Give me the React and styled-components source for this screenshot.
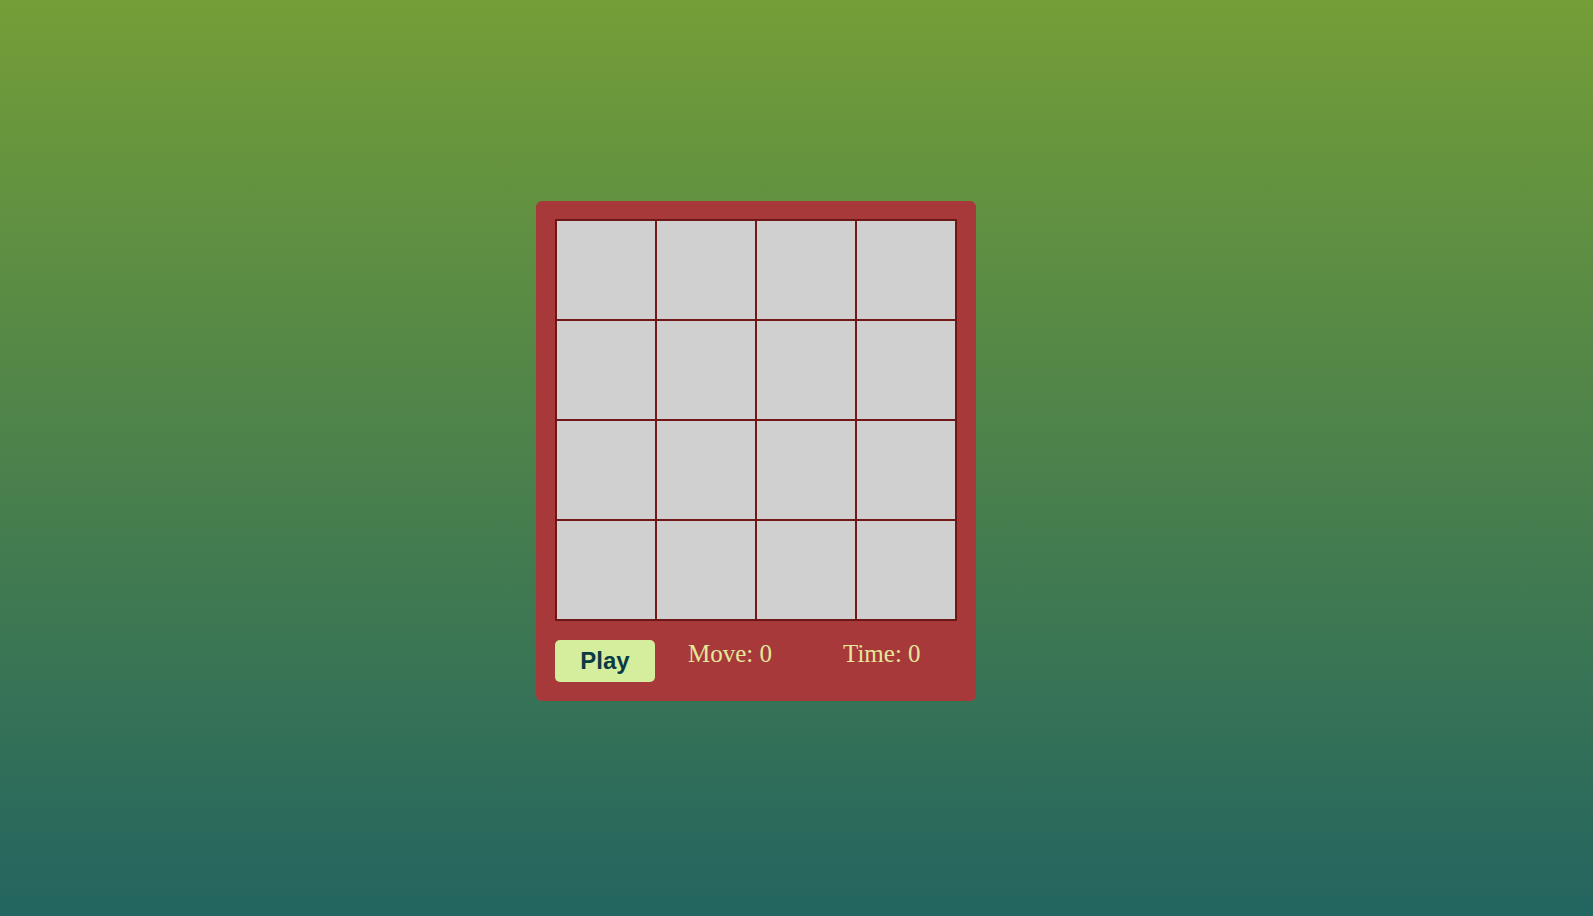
import React from "react";
import styled, { createGlobalStyle } from "styled-components";

const GlobalStyle = createGlobalStyle`
  html, body {
    margin: 0;
    padding: 0;
  }
  body {
    min-height: 100vh;
    background: linear-gradient(180deg, #749e37 0%, #236560 100%);
    font-family: "Liberation Serif", "Times New Roman", serif;
  }
`;

const Page = styled.div`
  min-height: 100vh;
  box-sizing: border-box;
  padding: 201px 0 0 536px;
`;

const Panel = styled.div`
  width: 440px;
  box-sizing: border-box;
  padding: 18px 19px 19px;
  background: #a8393a;
  border-radius: 6px;
`;

const Board = styled.div`
  display: grid;
  grid-template-columns: repeat(4, 100px);
  grid-template-rows: repeat(4, 100px);
  width: 400px;
  border: 1px solid #6a1616;
`;

const Cell = styled.div`
  box-sizing: border-box;
  background: #d0d0d0;
  border: 1px solid #721818;
`;

const Controls = styled.div`
  display: flex;
  align-items: flex-start;
  margin-top: 19px;
`;

const PlayButton = styled.button`
  width: 100px;
  height: 42px;
  border: none;
  border-radius: 5px;
  background: #d4ee9e;
  color: #0a3a44;
  font-family: "Liberation Sans", Arial, sans-serif;
  font-weight: bold;
  font-size: 24px;
  cursor: pointer;
`;

const Stat = styled.span`
  width: ${p => p.width}px;
  margin-left: ${p => p.offset}px;
  color: #e4e79a;
  font-size: 25px;
  line-height: 27px;
`;

const App = () => {
  const cells = Array.from({ length: 16 });
  return (
    <>
      <GlobalStyle />
      <Page>
        <Panel>
          <Board>
            {cells.map((_, i) => (
              <Cell key={i} />
            ))}
          </Board>
          <Controls>
            <PlayButton>Play</PlayButton>
            <Stat offset={33} width={155}>Move: 0</Stat>
            <Stat offset={0} width={100}>Time: 0</Stat>
          </Controls>
        </Panel>
      </Page>
    </>
  );
};

export default App;
